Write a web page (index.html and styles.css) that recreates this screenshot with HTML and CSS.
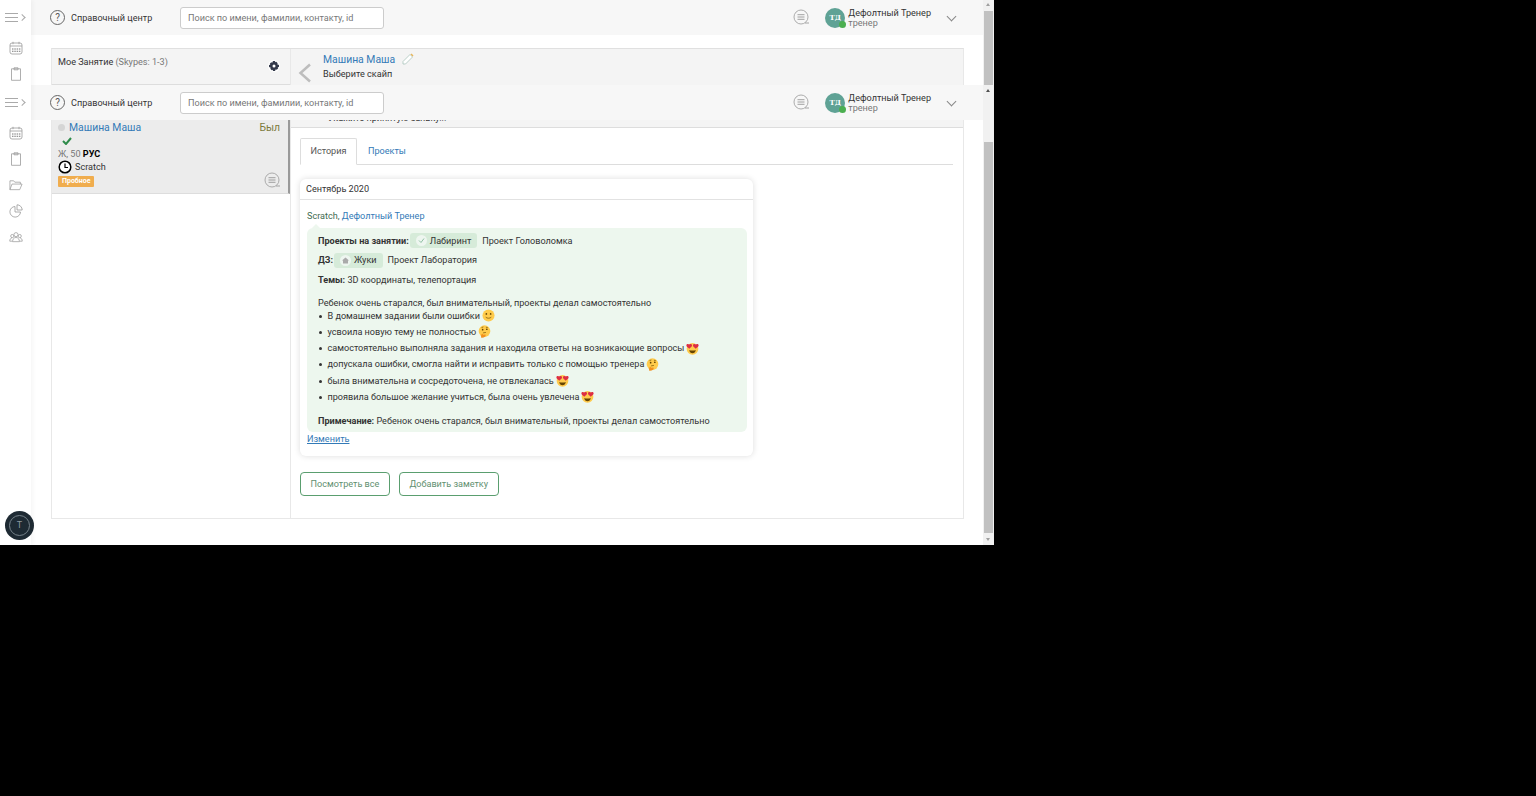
FILE: index.html
```html
<!DOCTYPE html>
<html lang="ru">
<head>
    <meta charset="UTF-8">
    <meta name="viewport" content="width=device-width, initial-scale=1.0">
    <title>Мое Занятие</title>
    <link rel="stylesheet" href="styles.css">
</head>
<body>
    <svg class="defs" width="0" height="0">
        <defs>
            <symbol id="i-cal" viewBox="0 0 14 14"><g fill="none" stroke="#9a9a9a" stroke-width=".8"><rect x="1" y="2" width="12" height="11" rx="2"/><path d="M1 5h12M4 .8v2.400M10 .8v2.400"/></g><path d="M3 7.500h1.500v1H3zM5.300 7.500h1.500v1H5.300zM7.600 7.500h1.500v1H7.600zM9.900 7.500h1.500v1H9.900zM3 9.800h1.500v1H3zM5.300 9.800h1.500v1H5.300zM7.600 9.800h1.500v1H7.600zM9.900 9.800h1.500v1H9.900z" fill="#777"/></symbol>
            <symbol id="i-clip" viewBox="0 0 12 14"><path d="M1.500 1.800h9v11.500h-9zM4 .8h4v2H4z" fill="#fff" stroke="#9a9a9a" stroke-width=".8"/></symbol>
            <symbol id="i-folder" viewBox="0 0 15 12"><path d="M1 11V1.500h4l1.200 1.500h6v2M1 11l2.200-6H14l-2.500 6z" fill="none" stroke="#9a9a9a" stroke-width=".8"/></symbol>
            <symbol id="i-pie" viewBox="0 0 14 14"><path d="M6 2.500a5.300 5.300 0 1 0 5.500 5.500H6z" fill="none" stroke="#9a9a9a" stroke-width=".8"/><path d="M8 .8a5.200 5.200 0 0 1 5.200 5.200H8z" fill="none" stroke="#9a9a9a" stroke-width=".8"/></symbol>
            <symbol id="i-team" viewBox="0 0 15 12"><g fill="none" stroke="#9a9a9a" stroke-width=".8"><circle cx="7.500" cy="3.500" r="2.200"/><circle cx="3.500" cy="5" r="1.700"/><circle cx="11.500" cy="5" r="1.700"/><path d="M3.800 11c0-2.500 1.500-4.500 3.700-4.500s3.700 2 3.700 4.500zM3.500 10.500H.8c0-2 1-3.500 2.400-3.500M11.500 10.500h2.700c0-2-1-3.500-2.400-3.500"/></g></symbol>
            <symbol id="i-chat" viewBox="0 0 17 17"><circle cx="8" cy="8" r="7" fill="none" stroke="#a3a3a3" stroke-width=".9"/><path d="M4.500 5.700h7M4.500 8h7M4.500 10.300h7" stroke="#8c8c8c" stroke-width=".8"/><path d="M12 14h4" stroke="#a3a3a3"/></symbol>
            <symbol id="i-smile" viewBox="0 0 14 14"><circle cx="7" cy="7" r="6.500" fill="#ffcb4c"/><circle cx="4.700" cy="5.300" r=".9" fill="#664500"/><circle cx="9.300" cy="5.300" r=".9" fill="#664500"/><path d="M4 8.800c1.500 1.500 4.500 1.500 6 0" fill="none" stroke="#664500" stroke-width=".7"/></symbol>
            <symbol id="i-think" viewBox="0 0 14 14"><circle cx="7" cy="6.500" r="6.300" fill="#ffcb4c"/><circle cx="5" cy="5" r=".9" fill="#664500"/><circle cx="9.500" cy="4.600" r=".9" fill="#664500"/><path d="M3.800 2.800l2-.7M8.500 2.400l2 .4M5.500 8.500l3-.5" fill="none" stroke="#664500" stroke-width=".7"/><path d="M3.500 13.600c-.6-2 0-3.500 1-4.500l1 1.500 2.500-.5c.5 1 .2 2-.5 2.500-1 .8-2.500 1.200-4 1z" fill="#f19020"/></symbol>
            <symbol id="i-love" viewBox="0 0 14 14"><circle cx="7" cy="7.300" r="6.300" fill="#ffcb4c"/><path d="M3.500 8.500c1.500.8 5.500.8 7 0-.3 2.500-1.800 3.500-3.500 3.500S3.800 11 3.500 8.500z" fill="#664500"/><path d="M3.500 7.200C2 6 .3 5 .4 3.500c.1-1.500 2-2 3-.8 1-1.200 3-.7 3.100.8.100 1.500-1.500 2.500-3 3.700z" fill="#dd2e44"/><path d="M10.500 7.200C9 6 7.400 5 7.500 3.500c.1-1.500 2-2 3-.8 1-1.200 3-.7 3.100.8.100 1.500-1.600 2.500-3.100 3.700z" fill="#dd2e44"/></symbol>
        </defs>
    </svg>

    <div class="window">
        <div class="page">
            <aside class="rail">
                <div class="burger"><span class="bars"></span><span class="more"></span></div>
                <svg class="rail-icon first"><use href="#i-cal"/></svg>
                <svg class="rail-icon"><use href="#i-clip"/></svg>
                <div class="burger overlay-burger"><span class="bars"></span><span class="more"></span></div>
                <svg class="rail-icon"><use href="#i-cal"/></svg>
                <svg class="rail-icon"><use href="#i-clip"/></svg>
                <svg class="rail-icon"><use href="#i-folder"/></svg>
                <svg class="rail-icon"><use href="#i-pie"/></svg>
                <svg class="rail-icon"><use href="#i-team"/></svg>
                <div class="bot"><span>T</span></div>
            </aside>

            <div class="content">
                <header class="topbar">
                    <span class="help-mark">?</span>
                    <span class="help-text">Справочный центр</span>
                    <div class="search">Поиск по имени, фамилии, контакту, id</div>
                    <svg class="top-chat"><use href="#i-chat"/></svg>
                    <div class="avatar">ТД<i></i></div>
                    <div class="who"><div>Дефолтный Тренер</div><small>тренер</small></div>
                    <span class="chevron"></span>
                </header>

                <main class="panel">
                    <section class="left">
                        <div class="left-head">
                            <span>Мое Занятие <em>(Skypes: 1-3)</em></span>
                            <span class="gear">
                                <svg width="10" height="10" viewBox="0 0 10 10"><path d="M4 0h2l.3 1.300 1-.5 1.400 1.400-.5 1L10 4v2l-1.300.3.500 1-1.400 1.400-1-.5L6 10H4l-.3-1.300-1 .5-1.400-1.400.5-1L0 6V4l1.300-.3-.5-1 1.400-1.400 1 .5z" fill="#33394a"/><circle cx="5" cy="5" r="1.500" fill="#fff"/></svg>
                            </span>
                        </div>
                        <div class="student">
                            <div class="student-row">
                                <span class="dot"></span>
                                <a class="student-name">Машина Маша</a>
                                <span class="was">Был</span>
                            </div>
                            <svg class="tick" width="10" height="8" viewBox="0 0 10 8"><path d="M1 4l3 3 5-6" fill="none" stroke="#2e8b4a" stroke-width="2"/></svg>
                            <div class="student-info">Ж, 50 <b>РУС</b></div>
                            <div class="student-course">
                                <svg width="14" height="14" viewBox="0 0 14 14"><circle cx="7" cy="7" r="5.800" fill="#fff" stroke="#000" stroke-width="1.500"/><path d="M7 3.500V7.500h3" fill="none" stroke="#000" stroke-width="1.200"/></svg>
                                Scratch
                            </div>
                            <span class="trial">Пробное</span>
                            <svg class="student-chat"><use href="#i-chat"/></svg>
                        </div>
                    </section>

                    <section class="right">
                        <div class="right-head">
                            <svg class="back" width="14" height="20" viewBox="0 0 14 20"><path d="M12 1.500L2.500 10l9.500 8.500" fill="none" stroke="#bdbdbd" stroke-width="2.500"/></svg>
                            <div>
                                <div class="head-name">
                                    <a>Машина Маша</a>
                                    <svg width="12" height="12" viewBox="0 0 12 12"><path d="M1 8.500L8 1.500l2.500 2.500-7 7H1z" fill="#fff" stroke="#a9c4bb" stroke-width=".8"/><path d="M9 1l2 2" stroke="#e8b65a" stroke-width="1.400"/></svg>
                                </div>
                                <div class="head-sub">Выберите скайп</div>
                                <div class="cut-text">Укажите принятую заявку...</div>
                            </div>
                        </div>

                        <nav class="tabs">
                            <span class="tab active">История</span>
                            <a class="tab">Проекты</a>
                        </nav>

                        <article class="note">
                            <div class="note-month">Сентябрь 2020</div>
                            <div class="note-body">
                                <div class="note-author">Scratch, <a>Дефолтный Тренер</a></div>
                                <div class="bubble">
                                    <div class="line">
                                        <b>Проекты на занятии:</b>
                                        <span class="chip">
                                            <span class="chip-icon"><svg width="7" height="7" viewBox="0 0 7 7"><path d="M1 3.500l2 2 3-4" fill="none" stroke="#8fc0a3"/></svg></span>
                                            Лабиринт
                                        </span>
                                        <span>Проект Головоломка</span>
                                    </div>
                                    <div class="line">
                                        <b>ДЗ:</b>
                                        <span class="chip">
                                            <span class="chip-icon"><svg width="7" height="7" viewBox="0 0 7 7"><path d="M3.500.5L7 3.500H6V6.500H1V3.500H0z" fill="#aaa"/></svg></span>
                                            Жуки
                                        </span>
                                        <span>Проект Лаборатория</span>
                                    </div>
                                    <div class="line topics"><b>Темы:</b> 3D координаты, телепортация</div>
                                    <p class="summary">Ребенок очень старался, был внимательный, проекты делал самостоятельно</p>
                                    <ul class="marks">
                                        <li>В домашнем задании были ошибки<svg class="emoji"><use href="#i-smile"/></svg></li>
                                        <li>усвоила новую тему не полностью<svg class="emoji"><use href="#i-think"/></svg></li>
                                        <li>самостоятельно выполняла задания и находила ответы на возникающие вопросы<svg class="emoji"><use href="#i-love"/></svg></li>
                                        <li>допускала ошибки, смогла найти и исправить только с помощью тренера<svg class="emoji"><use href="#i-think"/></svg></li>
                                        <li>была внимательна и сосредоточена, не отвлекалась<svg class="emoji"><use href="#i-love"/></svg></li>
                                        <li>проявила большое желание учиться, была очень увлечена<svg class="emoji"><use href="#i-love"/></svg></li>
                                    </ul>
                                    <p class="remark"><b>Примечание:</b> Ребенок очень старался, был внимательный, проекты делал самостоятельно</p>
                                </div>
                                <a class="edit">Изменить</a>
                            </div>
                        </article>

                        <div class="actions">
                            <button type="button">Посмотреть все</button>
                            <button type="button">Добавить заметку</button>
                        </div>
                    </section>
                </main>

                <header class="topbar overlay-bar">
                    <span class="help-mark">?</span>
                    <span class="help-text">Справочный центр</span>
                    <div class="search">Поиск по имени, фамилии, контакту, id</div>
                    <svg class="top-chat"><use href="#i-chat"/></svg>
                    <div class="avatar">ТД<i></i></div>
                    <div class="who"><div>Дефолтный Тренер</div><small>тренер</small></div>
                    <span class="chevron"></span>
                </header>
            </div>
        </div>

        <div class="scrollbar">
            <span class="arrow top"></span>
            <span class="thumb-top"></span>
            <span class="arrow up"></span>
            <span class="thumb-main"></span>
            <span class="arrow down"></span>
        </div>
    </div>
</body>
</html>
```

FILE: styles.css
```css
html,
body {
    margin: 0;
    height: 100%;
    background-color: #000;
}
body {
    font-family: Roboto, "Liberation Sans", sans-serif;
    font-size: 9.1px;
    color: #333;
    overflow: hidden;
}
a {
    color: #337ab7;
}
.defs {
    position: absolute;
}
.window {
    display: flex;
    width: 994px;
    height: 545px;
    background-color: #fff;
    overflow: hidden;
}
.page {
    display: flex;
    width: 983px;
    position: relative;
}

/* left rail */
.rail {
    width: 31px;
    flex: none;
    display: flex;
    flex-direction: column;
    align-items: center;
    background-color: #fff;
    box-shadow: 2px 0 4px rgba(0, 0, 0, 0.04);
    position: relative;
    z-index: 3;
}
.burger {
    display: flex;
    align-items: center;
    height: 35px;
    width: 31px;
    padding-left: 5px;
    box-sizing: border-box;
    gap: 3px;
}
.bars {
    width: 13px;
    height: 9px;
    border-top: 1px solid #aaa;
    border-bottom: 1px solid #aaa;
    box-sizing: border-box;
    position: relative;
}
.bars::after {
    content: "";
    position: absolute;
    left: 0;
    right: 0;
    top: 3px;
    height: 1px;
    background-color: #aaa;
}
.more {
    width: 4px;
    height: 4px;
    border-top: 1px solid #aaa;
    border-right: 1px solid #aaa;
    transform: rotate(45deg) translate(-1px, 1px);
}
.rail-icon {
    display: block;
    width: 14px;
    height: 14px;
    margin-bottom: 12px;
}
.rail-icon.first {
    margin-top: 6px;
}
.overlay-burger {
    margin-top: -6px;
    margin-bottom: 9px;
    height: 30px;
}
.bot {
    position: absolute;
    left: 5px;
    top: 511px;
    width: 29px;
    height: 29px;
    border-radius: 50%;
    background-color: #1e2a33;
    display: flex;
    align-items: center;
    justify-content: center;
}
.bot span {
    width: 19px;
    height: 19px;
    border: 1px solid #76828a;
    border-radius: 50%;
    color: #8d989f;
    font-size: 9px;
    line-height: 19px;
    text-align: center;
}

/* top bars */
.content {
    flex: 1;
    position: relative;
    min-width: 0;
}
.topbar {
    display: flex;
    align-items: center;
    height: 35px;
    padding-left: 19px;
    box-sizing: border-box;
    background-color: #f7f7f7;
}
.overlay-bar {
    position: absolute;
    left: 0;
    right: 0;
    top: 85px;
    z-index: 2;
}
.help-mark {
    width: 13px;
    height: 13px;
    border: 1px solid #666;
    border-radius: 50%;
    text-align: center;
    line-height: 13px;
    font-size: 10px;
    color: #555;
    flex: none;
}
.help-text {
    margin-left: 6px;
    width: 109px;
    flex: none;
}
.search {
    width: 204px;
    height: 22px;
    box-sizing: border-box;
    background-color: #fff;
    border: 1px solid #ccc;
    border-radius: 3px;
    padding-left: 7px;
    line-height: 20px;
    color: #777;
}
.top-chat {
    width: 17px;
    height: 17px;
    margin-left: auto;
}
.avatar {
    width: 20px;
    height: 20px;
    margin-left: 15px;
    border-radius: 50%;
    background-color: #5fa295;
    color: #fff;
    font-family: "DejaVu Serif", serif;
    font-weight: bold;
    font-size: 7px;
    line-height: 20px;
    text-align: center;
    position: relative;
}
.avatar i {
    position: absolute;
    right: -1px;
    bottom: 0;
    width: 7px;
    height: 7px;
    border-radius: 50%;
    background-color: #4caf50;
}
.who {
    margin-left: 3px;
    line-height: 10px;
}
.who small {
    font-size: 9.1px;
    color: #777;
}
.chevron {
    width: 6px;
    height: 6px;
    border-right: 1px solid #888;
    border-bottom: 1px solid #888;
    transform: rotate(45deg);
    margin: -3px 28px 0 17px;
}

/* main panel */
.panel {
    display: flex;
    width: 913px;
    height: 471px;
    margin: 13px 0 0 20px;
    box-sizing: border-box;
    border: 1px solid #e8e8e8;
    border-top-color: #e0e0e0;
}
.left {
    width: 239px;
    flex: none;
    box-sizing: border-box;
    border-right: 1px solid #e8e8e8;
}
.left-head {
    height: 36px;
    box-sizing: border-box;
    padding: 8px 10px 0 6px;
    background-color: #f4f4f4;
    border-bottom: 1px solid #ddd;
    display: flex;
    justify-content: space-between;
}
.left-head em {
    font-style: normal;
    color: #777;
}
.gear {
    width: 12px;
    height: 12px;
    margin-top: 3px;
    background-color: #fff;
    border-radius: 50%;
    display: flex;
    align-items: center;
    justify-content: center;
}
.student {
    position: relative;
    height: 74px;
    margin-top: 35px;
    padding: 1px 0 0 6px;
    box-sizing: border-box;
    background-color: #ececec;
    border-right: 2px solid #999;
    border-bottom: 1px solid #ddd;
}
.student-row {
    display: flex;
    align-items: center;
    height: 13px;
    padding-right: 8px;
}
.dot {
    width: 7px;
    height: 7px;
    border-radius: 50%;
    background-color: #d5d5d5;
    margin-right: 4px;
}
.student-name {
    font-size: 10.4px;
}
.was {
    margin-left: auto;
    font-size: 10.4px;
    color: #7d7a3c;
}
.tick {
    display: block;
    margin: 3px 0 3px 4px;
}
.student-info {
    line-height: 13px;
    color: #777;
}
.student-info b {
    color: #000;
}
.student-course {
    display: flex;
    align-items: center;
    gap: 3px;
    height: 13px;
    margin-top: -1px;
}
.trial {
    display: block;
    width: fit-content;
    margin-top: 3px;
    padding: 0 4px;
    background-color: #f0ad4e;
    border-radius: 1px;
    color: #fff;
    font-size: 7px;
    font-weight: bold;
    line-height: 11px;
}
.student-chat {
    position: absolute;
    right: 7px;
    bottom: 4px;
    width: 17px;
    height: 17px;
}

/* right column */
.right {
    flex: 1;
    min-width: 0;
}
.right-head {
    display: flex;
    height: 79px;
    box-sizing: border-box;
    background-color: #f4f4f4;
    border-bottom: 1px solid #ddd;
    padding: 4px 0 0 7px;
    gap: 11px;
}
.back {
    margin-top: 10px;
}
.head-name {
    display: flex;
    gap: 7px;
    font-size: 10.4px;
    line-height: 14px;
}
.head-sub {
    line-height: 14px;
}
.cut-text {
    margin: 31px 0 0 5px;
    line-height: 12px;
}
.tabs {
    display: flex;
    margin: 10px 10px 0 9px;
    height: 27px;
    box-sizing: border-box;
    border-bottom: 1px solid #ddd;
}
.tab {
    padding: 0 11px;
    line-height: 26px;
}
.tab.active {
    padding: 0 9.5px;
    background-color: #fff;
    height: 27px;
    line-height: 25px;
    box-sizing: border-box;
    border: 1px solid #ddd;
    border-bottom-color: #fff;
    border-radius: 2px 2px 0 0;
    color: #555;
}
.note {
    margin: 14px 0 0 9px;
    width: 453px;
    background-color: #fff;
    border-radius: 6px;
    box-shadow: 0 0 6px rgba(0, 0, 0, 0.14);
}
.note-month {
    height: 21px;
    line-height: 21px;
    padding-left: 6px;
    border-bottom: 1px solid #e2e2e2;
    box-sizing: border-box;
}
.note-body {
    padding: 8.5px 6px 10px 7px;
}
.note-author {
    line-height: 14px;
    color: #3f6b50;
}
.bubble {
    position: relative;
    margin-top: 5.5px;
    padding: 3px 11px 4px;
    background-color: #edf7ee;
    border-radius: 6px;
}
.bubble::before {
    content: "";
    position: absolute;
    left: 5px;
    top: -4px;
    border: 4px solid transparent;
    border-top: 0;
    border-bottom-color: #edf7ee;
}
.line {
    display: flex;
    align-items: center;
    gap: 1px;
    height: 19.5px;
}
.line > span:last-child {
    margin-left: 4px;
}
.topics {
    display: block;
    margin-top: 0.5px;
    line-height: 19px;
}
.chip {
    display: flex;
    align-items: center;
    gap: 3px;
    height: 15px;
    padding: 0 6px;
    background-color: #d6ebd9;
    border-radius: 3px;
}
.chip-icon {
    width: 11px;
    height: 11px;
    border-radius: 50%;
    background-color: #eef6f0;
    display: flex;
    align-items: center;
    justify-content: center;
}
.summary {
    margin: 6.5px 0 0;
    line-height: 12px;
}
.marks {
    margin: -1px 0 0;
    padding-left: 9.5px;
    list-style: none;
}
.marks li {
    position: relative;
    height: 16.25px;
    display: flex;
    align-items: center;
    gap: 2px;
}
.marks li::before {
    content: "";
    position: absolute;
    left: -8.5px;
    top: 7px;
    width: 3px;
    height: 3px;
    border-radius: 50%;
    background-color: #333;
}
.emoji {
    width: 13px;
    height: 13px;
    flex: none;
}
.remark {
    margin: 9.5px 0 0;
    line-height: 13px;
}
.edit {
    display: inline-block;
    margin-top: 1px;
    line-height: 13px;
    text-decoration: underline;
}
.actions {
    display: flex;
    gap: 9px;
    margin: 16px 0 0 9px;
}
.actions button {
    height: 24px;
    padding: 0 9.5px;
    background-color: #fff;
    border: 1px solid #5a9e6f;
    border-radius: 4px;
    font-family: inherit;
    font-size: 9.1px;
    color: #5f9070;
}

/* browser scrollbar */
.scrollbar {
    width: 11px;
    flex: none;
    position: relative;
    background-color: #f1f1f1;
}
.thumb-top,
.thumb-main {
    position: absolute;
    left: 1px;
    right: 1px;
    background-color: #c1c1c1;
}
.thumb-top {
    top: 11px;
    height: 74px;
}
.thumb-main {
    top: 142px;
    height: 391px;
}
.arrow {
    position: absolute;
    left: 3px;
    border: 2.5px solid transparent;
}
.arrow.top {
    top: 3px;
    border-top: 0;
    border-bottom: 3px solid #a0a0a0;
}
.arrow.up {
    top: 89px;
    border-top: 0;
    border-bottom: 3px solid #505050;
}
.arrow.down {
    top: 538px;
    border-bottom: 0;
    border-top: 3px solid #a0a0a0;
}
```
